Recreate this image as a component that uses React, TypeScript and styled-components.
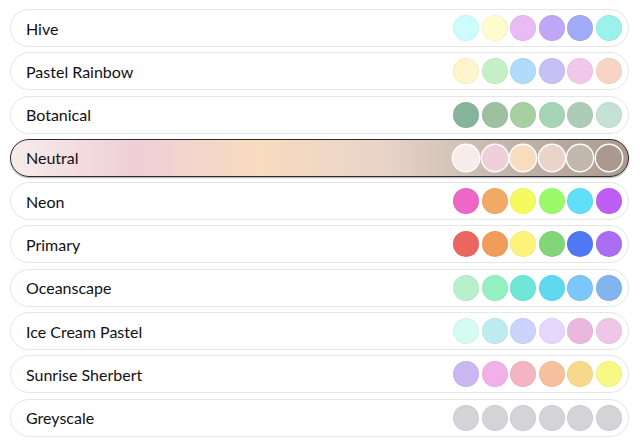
import React from "react";
import styled, { createGlobalStyle, css } from "styled-components";

const GlobalStyle = createGlobalStyle`
  html, body {
    margin: 0;
    padding: 0;
    background: #ffffff;
  }
  body {
    font-family: Lato, "Noto Sans", "Liberation Sans", sans-serif;
    color: #1a1a1a;
  }
`;

type Palette = {
  name: string;
  colors: string[];
};

const palettes: Palette[] = [
  { name: "Hive", colors: ["#ccfcfb", "#fefbcf", "#e8bbf5", "#c0a7f5", "#a0acf5", "#9af2ea"] },
  { name: "Pastel Rainbow", colors: ["#fef5cc", "#c6f0c8", "#b0dbfb", "#c6c0f4", "#f0c8ea", "#f8d4c4"] },
  { name: "Botanical", colors: ["#86b49a", "#9cc0a0", "#a8cfa2", "#a6d4b6", "#aecbb6", "#c3e2d4"] },
  { name: "Neutral", colors: ["#f7ecea", "#efcfd9", "#f8dcbe", "#ead4c9", "#c2b7ac", "#ab9990"] },
  { name: "Neon", colors: ["#ee66c6", "#f2aa66", "#f5fa5e", "#9cfa6a", "#60e0f8", "#bd5ef5"] },
  { name: "Primary", colors: ["#ec6660", "#f29c5a", "#fdf27a", "#82d67a", "#5078f5", "#aa6cf0"] },
  { name: "Oceanscape", colors: ["#b8f0cc", "#94f0c0", "#6ee6d8", "#60d8f0", "#7cc6f8", "#84b4ee"] },
  { name: "Ice Cream Pastel", colors: ["#d6fcf2", "#bdecf0", "#cad4fa", "#e5d8fc", "#eab8de", "#f0c6e6"] },
  { name: "Sunrise Sherbert", colors: ["#cbb8f2", "#f2b0e8", "#f4b4c4", "#f6c29e", "#f8d88a", "#f8f884"] },
  { name: "Greyscale", colors: ["#d4d4d8", "#d4d4d8", "#d4d4d8", "#d4d4d8", "#d4d4d8", "#d4d4d8"] },
];

const SELECTED = "Neutral";

const List = styled.div`
  display: flex;
  flex-direction: column;
  gap: 5.3px;
  width: 619px;
  padding: 9px 0 0 10px;
`;

const Row = styled.div<{ $selected?: boolean; $gradient?: string }>`
  box-sizing: border-box;
  height: 38px;
  display: flex;
  align-items: center;
  justify-content: space-between;
  padding: 0 6px 0 15px;
  border: 1px solid #e6e6e6;
  border-radius: 19px;
  background: #ffffff;

  ${(p) =>
    p.$selected &&
    css`
      border-color: #2a2a2a;
      background: ${p.$gradient};
      box-shadow: 0 1px 1.5px rgba(0, 0, 0, 0.35);
    `}
`;

const Name = styled.span`
  font-size: 16px;
  color: #111111;
`;

const Swatches = styled.div`
  display: flex;
  gap: 2.6px;
`;

const Swatch = styled.span<{ $color: string; $selected?: boolean }>`
  width: 26px;
  height: 26px;
  border-radius: 50%;
  background: ${(p) => p.$color};
  box-shadow: inset 0 0 0 1px rgba(0, 0, 0, 0.04);

  ${(p) =>
    p.$selected &&
    css`
      box-shadow: 0 0 0 1.4px #ffffff;
    `}
`;

const gradientOf = (colors: string[]) =>
  `linear-gradient(to right, ${colors
    .map((c, i) => `${c} ${Math.round((i / (colors.length - 1)) * 100)}%`)
    .join(", ")})`;

export default function App() {
  return (
    <>
      <GlobalStyle />
      <List>
        {palettes.map((p) => {
          const selected = p.name === SELECTED;
          return (
            <Row key={p.name} $selected={selected} $gradient={gradientOf(p.colors)}>
              <Name>{p.name}</Name>
              <Swatches>
                {p.colors.map((c, i) => (
                  <Swatch key={i} $color={c} $selected={selected} />
                ))}
              </Swatches>
            </Row>
          );
        })}
      </List>
    </>
  );
}
